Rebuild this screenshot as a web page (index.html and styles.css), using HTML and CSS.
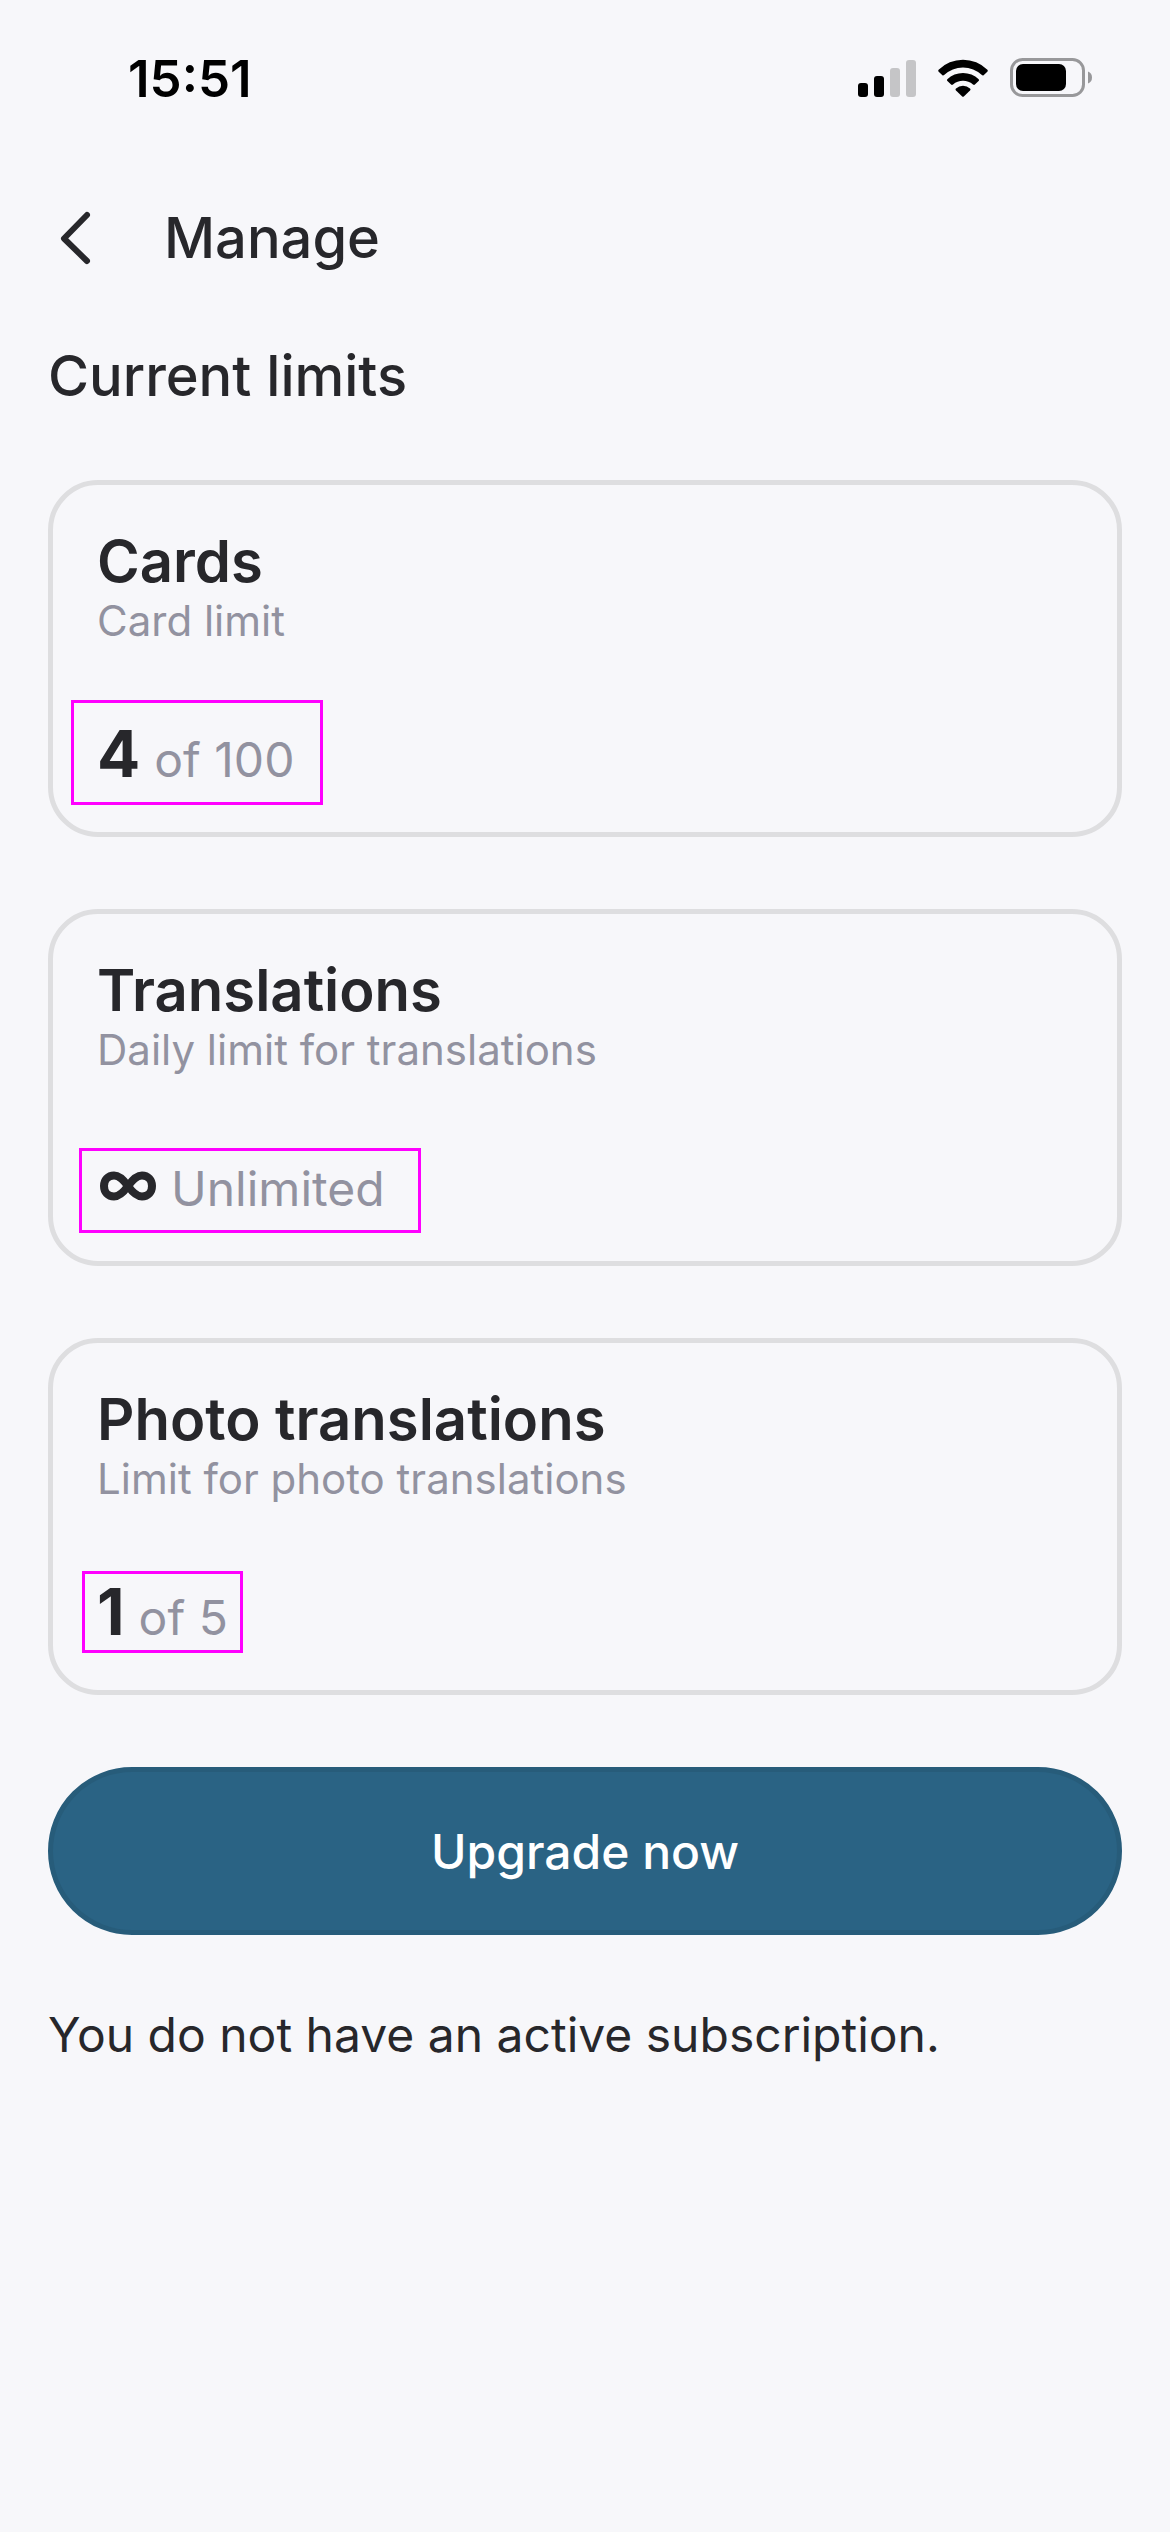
FILE: index.html
```
<!DOCTYPE html>
<html lang="en">
  <head>
    <meta charset="UTF-8" />
    <meta name="viewport" content="width=device-width, initial-scale=1.0" />
    <title>Manage</title>
    <link rel="stylesheet" href="styles.css">
  </head>
  <body>
    <div class="status-bar">
      <span class="time">15:51</span>
      <div class="status-icons">
        <svg width="58" height="38" viewBox="0 0 58 38" aria-hidden="true">
          <rect x="0" y="24" width="10" height="14" rx="3" />
          <rect x="16" y="17" width="10" height="21" rx="3" />
          <rect x="32" y="9" width="10" height="29" rx="3" fill="#c5c5c7" />
          <rect x="48" y="1" width="10" height="37" rx="3" fill="#c5c5c7" />
        </svg>
        <svg width="50" height="38" viewBox="0 0 50 38" aria-hidden="true">
          <path d="M.6 10.8Q-.2 11.8.7 12.7L4.4 16.2Q5.2 17 6.1 16.1A27.5 27.5 0 0 1 43.9 16.1Q44.8 17 45.6 16.2L49.3 12.7Q50.2 11.8 49.4 10.8A34.6 34.6 0 0 0 .6 10.8Z" />
          <path d="M9.3 20.2Q8.5 21.2 9.4 22L13.1 25.5Q14 26.3 15 25.4A15.2 15.2 0 0 1 35 25.4Q36 26.3 36.9 25.5L40.6 22Q41.5 21.2 40.7 20.2A22.8 22.8 0 0 0 9.3 20.2Z" />
          <path d="M18 29.5Q17 30.5 18 31.5L24.2 37.5Q25 38.2 25.8 37.5L32 31.5Q33 30.5 32 29.5A10.5 10.5 0 0 0 18 29.5Z" />
        </svg>
        <svg width="82" height="40" viewBox="0 0 82 40" aria-hidden="true">
          <rect x="1.5" y="1.5" width="72" height="36" rx="11" fill="none" stroke="#98989a" stroke-width="3" />
          <rect x="6" y="6" width="50" height="27" rx="7" />
          <path d="M78 13.5Q82 15 82 19.5Q82 24 78 25.5Z" fill="#98989a" />
        </svg>
      </div>
    </div>

    <header class="header">
      <button type="button" class="back" aria-label="Back">
        <svg width="32" height="54" viewBox="0 0 32 54" aria-hidden="true">
          <path d="M27 4L4 27.5L27 50" fill="none" stroke="#27272b" stroke-width="6" stroke-linecap="round" stroke-linejoin="round" />
        </svg>
      </button>
      <h1>Manage</h1>
    </header>

    <main class="content">
      <h2>Current limits</h2>

      <div class="limits">
        <section class="card">
          <h3>Cards</h3>
          <p class="description">Card limit</p>
          <p class="amount amount-cards"><strong>4</strong> <span>of 100</span></p>
        </section>

        <section class="card">
          <h3>Translations</h3>
          <p class="description">Daily limit for translations</p>
          <p class="amount amount-translations">
            <strong>
              <svg width="60" height="36" viewBox="0 0 60 36" role="img" aria-label="Infinity">
                <path d="M31 16C26 9 22 5.500 17 5.500C11 5.500 7 10 7 16C7 22 11 26.500 17 26.500C22 26.500 26 23 31 16C36 9 40 5.500 45 5.500C51 5.500 55 10 55 16C55 22 51 26.500 45 26.500C40 26.500 36 23 31 16Z" fill="none" stroke="#27272b" stroke-width="8" />
              </svg>
            </strong>
            <span>Unlimited</span>
          </p>
        </section>

        <section class="card">
          <h3>Photo translations</h3>
          <p class="description">Limit for photo translations</p>
          <p class="amount amount-photos"><strong>1</strong> <span>of 5</span></p>
        </section>
      </div>

      <button type="button" class="upgrade">Upgrade now</button>
      <p class="subscription">You do not have an active subscription.</p>
    </main>
  </body>
</html>
```

FILE: styles.css
```
*,
*::after {
  box-sizing: border-box;
}
body {
  margin: 0;
  font-family: Inter, "Noto Sans", sans-serif;
  color: #27272b;
  background-color: #f7f7fa;
}
h1,
h2,
h3,
p {
  margin: 0;
}
.status-bar {
  display: flex;
  justify-content: space-between;
  align-items: center;
  height: 156px;
  padding: 0 78px 0 128px;
  color: black;
}
.time {
  font-size: 51px;
  font-weight: 600;
}
.status-icons {
  display: flex;
  align-items: center;
  gap: 22px;
}
.header {
  display: flex;
  align-items: center;
  gap: 72px;
  height: 164px;
  padding: 0 60px;
}
.back {
  display: flex;
  padding: 0;
  border: none;
  background: none;
  cursor: pointer;
}
h1,
h2 {
  font-size: 56px;
  font-weight: 500;
  line-height: 64px;
}
.content {
  padding: 24px 48px;
}
.limits {
  display: flex;
  flex-direction: column;
  gap: 72px;
  margin-top: 72px;
}
.card {
  padding: 46px 44px 38px;
  border: 5px solid #dedee0;
  border-radius: 50px;
}
h3 {
  font-size: 58px;
  font-weight: 600;
  line-height: 60px;
}
.description {
  font-size: 42px;
  line-height: 60px;
  color: #9292a0;
}
.amount {
  position: relative;
  display: flex;
  align-items: baseline;
  gap: 14px;
  margin-top: 63px;
  font-size: 48px;
  line-height: 60px;
  color: #9292a0;
}
.amount strong {
  font-size: 64px;
  font-weight: 700;
  line-height: 80px;
  color: #27272b;
}
/* highlight frame over the amount */
.amount::after {
  content: "";
  position: absolute;
  border: 3px solid #ff00ff;
}
.amount-cards::after {
  top: -14px;
  left: -26px;
  width: 252px;
  height: 105px;
}
.amount-translations::after {
  top: 5px;
  left: -18px;
  width: 342px;
  height: 85px;
}
.amount-photos::after {
  top: -1px;
  left: -15px;
  width: 161px;
  height: 82px;
}
.upgrade {
  width: 100%;
  height: 168px;
  margin-top: 72px;
  border: 5px solid #275c7a;
  border-radius: 84px;
  font-family: inherit;
  font-size: 48px;
  font-weight: 500;
  color: white;
  background: #2a6384;
  cursor: pointer;
}
.subscription {
  margin-top: 68px;
  font-size: 48px;
  line-height: 64px;
}
```
